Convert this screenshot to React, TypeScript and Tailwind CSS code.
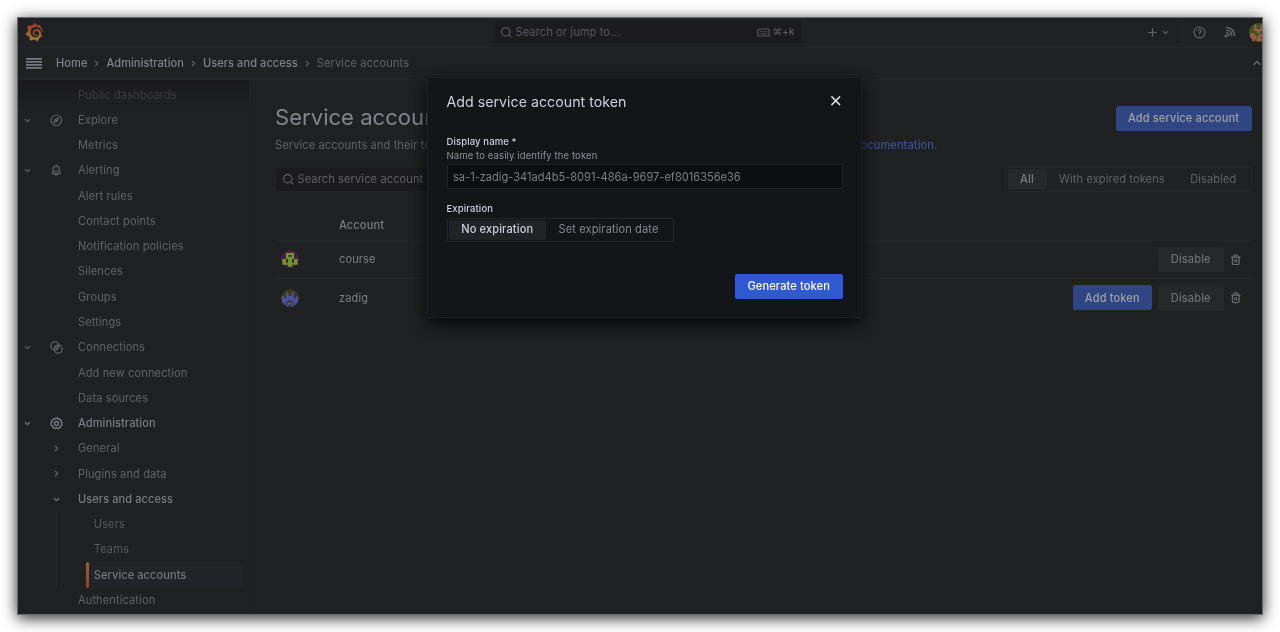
import type { ReactNode } from "react";
import { ChevronDown, ChevronRight, ChevronUp, Plus, Search, X } from "lucide-react";
import { SiGrafana } from "react-icons/si";

type IconProps = { className?: string };

function CompassIcon({ className }: IconProps) {
  return (
    <svg viewBox="0 0 24 24" className={className} fill="none" stroke="currentColor" strokeWidth="2.200" strokeLinejoin="round">
      <circle cx="12" cy="12" r="10" />
      <path d="M16.2 7.8 14 14l-6.200 2.200L10 10z" />
      <path d="m10.500 10.500 3 3" />
    </svg>
  );
}

function BellIcon({ className }: IconProps) {
  return (
    <svg viewBox="0 0 24 24" className={className} fill="none" stroke="currentColor" strokeWidth="2.200" strokeLinecap="round" strokeLinejoin="round">
      <path d="M12 1.500V4M6 14v-4a6 6 0 0 1 12 0v4M4.500 18.500v-1.700C4.500 15 5.500 14 7 14h10c1.500 0 2.500 1 2.500 2.800v1.700z" />
      <path d="M9 19a3.100 3.100 0 0 0 6 0" />
    </svg>
  );
}

function ConnectionsIcon({ className }: IconProps) {
  return (
    <svg viewBox="0 0 24 24" className={className} fill="none" stroke="currentColor" strokeWidth="2.200">
      <circle cx="9" cy="9" r="7.500" />
      <circle cx="15" cy="15" r="7.500" />
      <path d="M8 13.500 13.500 8M10.500 16 16 10.500" />
    </svg>
  );
}

function CogIcon({ className }: IconProps) {
  return (
    <svg viewBox="0 0 24 24" className={className} fill="none" stroke="currentColor" strokeWidth="2.400" strokeLinejoin="round">
      <path d="M9.500 1.500h5l1.200 2 2.300-.5 3 3.500-.9 2.200 2.400 1.500-.9 5-2.400.6-.4 2.500-4.200 2.300L12 19l-2.600 1.600-4.200-2.300-.4-2.500-2.400-.6-.9-5 2.400-1.500L3 6.500 6 3l2.300.5z" transform="translate(0 .8)" />
      <circle cx="12" cy="12" r="3.700" />
    </svg>
  );
}

function HelpIcon({ className }: IconProps) {
  return (
    <svg viewBox="0 0 24 24" className={className} fill="none" stroke="currentColor" strokeWidth="2.200" strokeLinecap="round">
      <circle cx="12" cy="12" r="10" />
      <path d="M9.600 8.800a2.700 2.700 0 1 1 3.700 2.900c-.9.4-1.300.9-1.300 1.800M12 16.700v.1" />
    </svg>
  );
}

function RssIcon({ className }: IconProps) {
  return (
    <svg viewBox="0 0 24 24" className={className} fill="none" stroke="currentColor" strokeWidth="3.200" strokeLinecap="round">
      <path d="M5 3c9 0 16 7 16 16M5 8.500C11 8.500 15.500 13 15.500 19M5 14c3 0 5 2 5 5" />
      <circle cx="4" cy="20" r="1.500" fill="currentColor" />
    </svg>
  );
}

function KeyboardIcon({ className }: IconProps) {
  return (
    <svg viewBox="0 0 24 16" className={className} fill="none" stroke="currentColor" strokeWidth="2.200" strokeLinecap="round">
      <rect x="1.500" y="1.500" width="21" height="13" rx="2.500" />
      <path d="M6 6h.1M10 6h.1M14 6h.1M18 6h.1M6 10h.1M9.500 10.500h5M18 10h.1" />
    </svg>
  );
}

function TrashIcon({ className }: IconProps) {
  return (
    <svg viewBox="0 0 24 24" className={className} fill="none" stroke="currentColor" strokeWidth="2.600" strokeLinecap="round" strokeLinejoin="round">
      <path d="M3 6.500h18M8 6V4a2 2 0 0 1 2-2h4a2 2 0 0 1 2 2v2M5 6.500V19a3 3 0 0 0 3 3h8a3 3 0 0 0 3-3V6.500M10 11.500v5M14 11.500v5" />
    </svg>
  );
}

function CourseAvatar() {
  return (
    <svg viewBox="0 0 54 54" className="size-[18px]">
      <circle cx="27" cy="27" r="27" fill="#4a1f42" />
      <path
        fill="#6c972f"
        fillRule="evenodd"
        d="M15 9h24v18h-6v11h6V27h11v17H33v6H21v-6H4V27h11v11h6V27h-6zM22 15v5h10v-5z"
      />
    </svg>
  );
}

function ZadigAvatar() {
  return (
    <svg viewBox="0 0 54 54" className="size-[18px]">
      <circle cx="27" cy="27" r="27" fill="#3b3a1e" />
      <path
        fill="#4c52a3"
        d="M16 10h6v10h10V10h6v18h7v-6h6v20h-6v5h-5v-5l-6-5-7-4-7 4-6 5v5H9v-5H3V22h6v6h7zM17 44l6-4h8l6 4v9h-5v-6h-10v6h-5z"
      />
    </svg>
  );
}

function UserAvatar() {
  return (
    <svg viewBox="0 0 54 54" className="size-[19px] shrink-0">
      <circle cx="27" cy="27" r="27" fill="#3d5722" />
      <path fill="#a05c50" d="M15 5h6v12h12V5h6v18h-8v6h-8v-6h-8zM3 29h12v7h6v10h-6v6H9V42H3zM24 36h6v-4h8v8h-5v5h7v7H22v-7h2z" />
    </svg>
  );
}

type NavEntry = { label: string; icon?: ReactNode; open?: boolean; strong?: boolean; faded?: boolean };

const topNav: NavEntry[] = [
  { label: "Public dashboards", faded: true },
  { label: "Explore", icon: <CompassIcon className="size-[12.5px]" />, open: true },
  { label: "Metrics" },
  { label: "Alerting", icon: <BellIcon className="size-[12.5px]" />, open: true },
  { label: "Alert rules" },
  { label: "Contact points" },
  { label: "Notification policies" },
  { label: "Silences" },
  { label: "Groups" },
  { label: "Settings" },
  { label: "Connections", icon: <ConnectionsIcon className="size-[13px]" />, open: true },
  { label: "Add new connection" },
  { label: "Data sources" },
  { label: "Administration", icon: <CogIcon className="size-[13px]" />, open: true, strong: true },
  { label: "General", icon: <ChevronRight className="size-[9px]" strokeWidth={3.5} /> },
  { label: "Plugins and data", icon: <ChevronRight className="size-[9px]" strokeWidth={3.5} /> },
  { label: "Users and access", icon: <ChevronDown className="size-[9px]" strokeWidth={3.5} />, strong: true },
];

function NavRow({ entry }: { entry: NavEntry }) {
  const tone = entry.strong
    ? "text-[#7c7b83] font-medium tracking-[0.070px]"
    : entry.faded
      ? "text-[#3d3d41]"
      : "text-[#636368]";
  return (
    <div className={`flex h-[25.27px] items-center ${tone}`}>
      <span className="flex w-5 justify-center">{entry.open && <ChevronDown className="size-[9px]" strokeWidth={3.4} />}</span>
      <span className="ml-[8.500px] flex w-5 justify-center">{entry.icon}</span>
      <span className="ml-3">{entry.label}</span>
    </div>
  );
}

function Crumb({ children }: { children: ReactNode }) {
  return (
    <>
      <span className="font-medium tracking-[0.060px] text-[#82818a]">{children}</span>
      <span className="flex w-[19px] justify-center text-[#626267]">
        <ChevronRight className="size-[9px]" strokeWidth={3} />
      </span>
    </>
  );
}

function Header() {
  return (
    <header className="shrink-0">
      <div className="flex h-[30px] items-center border-b border-[#242527] pl-[7px]">
        <SiGrafana className="size-[18px] shrink-0" fill="url(#logo-gradient)" stroke="url(#logo-gradient)" strokeWidth="0.5" />
        <div className="ml-[451px] flex h-[23px] w-[307px] shrink-0 items-center rounded-[2px] bg-[#1c1c1f] pr-1.5 pl-1.5 text-[#57575c]">
          <Search className="size-[12.500px]" strokeWidth={2.3} />
          <span className="ml-[3.500px]">Search or jump to...</span>
          <KeyboardIcon className="ml-auto h-[9px] w-[13px]" />
          <span className="ml-[3px] text-[9.5px] font-semibold tracking-[0.200px]">⌘+k</span>
        </div>
        <div className="ml-[345px] flex shrink-0 items-center text-[#636368]">
          <Plus className="size-[13px]" strokeWidth={2.3} />
          <ChevronDown className="ml-[2px] size-[9px]" strokeWidth={3} />
          <span className="ml-3 h-[19px] w-px bg-[#28292b]" />
          <HelpIcon className="ml-[10.500px] size-[13px]" />
          <RssIcon className="ml-[18px] size-[12px]" />
        </div>
        <span className="ml-[13px] flex shrink-0">
          <UserAvatar />
        </span>
      </div>
      <div className="flex h-[32.500px] items-center border-b border-[#242527] pl-[8.500px]">
        <svg viewBox="0 0 16 11" className="h-[11px] w-4 text-[#77767e]" fill="none" stroke="currentColor" strokeWidth="1.600">
          <path d="M0 .9h16M0 3.900h16M0 6.900h16M0 9.900h16" />
        </svg>
        <nav className="ml-3.5 flex items-center">
          <Crumb>Home</Crumb>
          <Crumb>Administration</Crumb>
          <Crumb>Users and access</Crumb>
          <span className="text-[#646469]">Service accounts</span>
        </nav>
        <ChevronUp className="mr-[-1px] ml-auto size-[12px] text-[#6a6a6f]" strokeWidth={2.8} />
      </div>
    </header>
  );
}

function Sidebar() {
  return (
    <aside className="relative w-[232px] shrink-0 border-r border-[#232426] pt-[2.300px]">
      <div className="absolute inset-x-0 top-0 h-7 bg-linear-to-b from-[#1b1b1e] to-transparent" />
      <div className="relative">
        {topNav.map((entry) => (
          <NavRow key={entry.label} entry={entry} />
        ))}
        <div className="ml-[38px] border-l border-[#27282b] text-[#5a5a5f]">
          <div className="flex h-[25.27px] items-center pl-[37.300px]">Users</div>
          <div className="flex h-[25.27px] items-center pl-[37.300px]">Teams</div>
          <div className="ml-[29.500px] flex h-[25.27px] w-[157px] items-center rounded-[2px] bg-[#232428] font-medium tracking-[0.060px] text-[#76757d]">
            <span className="h-full w-[3px] rounded-[2px] bg-linear-to-b from-[#a5592c] to-[#93412f]" />
            <span className="ml-[4.800px]">Service accounts</span>
          </div>
        </div>
        <NavRow entry={{ label: "Authentication" }} />
      </div>
    </aside>
  );
}

function AccountRow({ avatar, name, addToken }: { avatar: ReactNode; name: string; addToken?: boolean }) {
  return (
    <div className="flex h-[38.400px] items-center border-t border-[#252628]">
      <span className="ml-[6px] flex">{avatar}</span>
      <span className="ml-[40px] text-[#7e7d85]">{name}</span>
      <div className="ml-auto flex items-center font-medium">
        {addToken && (
          <span className="flex h-[25px] w-[79.500px] items-center justify-center rounded-[2px] bg-[#304683] text-[#9fa0a7]">Add token</span>
        )}
        <span className="ml-[6px] flex h-[25.500px] w-[65.500px] items-center justify-center rounded-[2px] bg-[#27282a] text-[#706f77]">
          Disable
        </span>
        <TrashIcon className="mr-[10px] ml-[6.500px] size-[11.500px] text-[#6b6a72]" />
      </div>
    </div>
  );
}

function Content() {
  return (
    <main className="flex-1 pr-[10.500px] pl-[25.500px]">
      <div className="mt-[25.500px] flex h-[25px] items-center justify-between">
        <h1 className="text-[22.100px] font-normal tracking-[0] text-[#85848d]">Service accounts</h1>
        <span className="flex h-[25px] w-[136px] items-center justify-center rounded-[2px] bg-[#304683] font-medium text-[#9fa0a7]">
          Add service account
        </span>
      </div>
      <p className="mt-[6.500px] leading-4 whitespace-nowrap text-[#636368]">
        Service accounts and their tokens can be used to authenticate against the Grafana API. Find out more in our{" "}
        <span className="font-medium tracking-[0.060px] text-[#3b5296]">documentation.</span>
      </p>
      <div className="mt-[13.500px] flex h-[25px] items-center justify-between text-[#626267]">
        <div className="flex h-full w-[400px] items-center rounded-[2px] border border-[#232426] bg-[#1c1c1f] pl-[5.500px]">
          <Search className="size-[12.500px]" strokeWidth={2.2} />
          <span className="ml-[3.500px]">Search service account by name</span>
        </div>
        <div className="flex h-full w-[247px] items-center rounded-[2px] border border-[#252628] pl-[2px]">
          <span className="flex h-[20px] w-[39px] items-center justify-center rounded-[2px] bg-[#28292b] font-medium text-[#7c7b83]">All</span>
          <span className="ml-[12.500px]">With expired tokens</span>
          <span className="ml-auto pr-[14px]">Disabled</span>
        </div>
      </div>
      <div className="mt-[17px] flex h-[31.300px] items-center pt-[1.800px] pl-[64px] font-medium text-[#7c7b83]">Account</div>
      <AccountRow avatar={<CourseAvatar />} name="course" />
      <AccountRow avatar={<ZadigAvatar />} name="zadig" addToken />
    </main>
  );
}

function TokenModal() {
  return (
    <section
      role="dialog"
      className="absolute top-[59px] left-[409px] h-[241px] w-[435px] rounded-[2px] border border-[#1f2025] bg-[#141519] pr-[18.500px] pl-[18.500px] text-[#cfcfdc] shadow-[0_6px_16px_rgba(1,4,9,0.9)]"
    >
      <div className="mt-[11.500px] flex h-6 items-center justify-between">
        <h2 className="text-[14.200px] tracking-[0.020px]">Add service account token</h2>
        <X className="-mt-[2px] mr-[-1px] size-[15.500px] text-[#dcdce4]" strokeWidth={2.3} />
      </div>
      <div className="mt-[21px] text-[9.500px] leading-[14px] font-medium">Display name *</div>
      <div className="text-[9.500px] leading-[13px] text-[#8f8f98]">Name to easily identify the token</div>
      <div className="mt-[2px] flex h-[25.500px] w-full items-center rounded-[2px] border border-[#222329] bg-[#0d0e12] pt-[2px] pl-[5.500px] tracking-[0.010px] text-[#7e7e86]">
        sa-1-zadig-341ad4b5-8091-486a-9697-ef8016356e36
      </div>
      <div className="mt-[12.500px] text-[9.500px] leading-[14px] font-medium">Expiration</div>
      <div className="mt-[2px] flex h-[24.500px] w-[227px] items-center rounded-[2px] border border-[#25262b] pl-[1px]">
        <span className="flex h-[20.500px] w-[97.500px] items-center justify-center rounded-[2px] bg-[#222327] font-medium">No expiration</span>
        <span className="ml-[12.500px] text-[#87878f]">Set expiration date</span>
      </div>
      <div className="mt-[31.500px] flex justify-end">
        <button className="h-[25.500px] w-[107.500px] rounded-[2px] bg-[#305ad2] font-medium text-white">Generate token</button>
      </div>
    </section>
  );
}

export default function App() {
  return (
    <div className="h-[632px] w-[1280px] overflow-hidden bg-white pt-[17px] pl-[17px] font-['Inter','DejaVu_Sans',sans-serif] text-[11.060px] leading-normal tracking-[0.118px]">
      <svg className="absolute size-0">
        <linearGradient id="logo-gradient" x1="0" y1="0" x2="0" y2="1">
          <stop offset="0" stopColor="#9a3a2e" />
          <stop offset="0.5" stopColor="#a5562b" />
          <stop offset="1" stopColor="#a88125" />
        </linearGradient>
      </svg>
      <div className="relative h-[597.500px] w-[1246px] border border-[#6b6c6e] bg-[#202123] shadow-[0_3px_14px_rgba(0,0,0,0.85)]">
        <div className="h-full overflow-hidden">
          <div className="-mt-[0.500px] -ml-[0.500px] flex h-full flex-col blur-[0.750px]">
            <Header />
            <div className="flex min-h-0 flex-1">
              <Sidebar />
              <Content />
            </div>
          </div>
        </div>
        <TokenModal />
      </div>
    </div>
  );
}
